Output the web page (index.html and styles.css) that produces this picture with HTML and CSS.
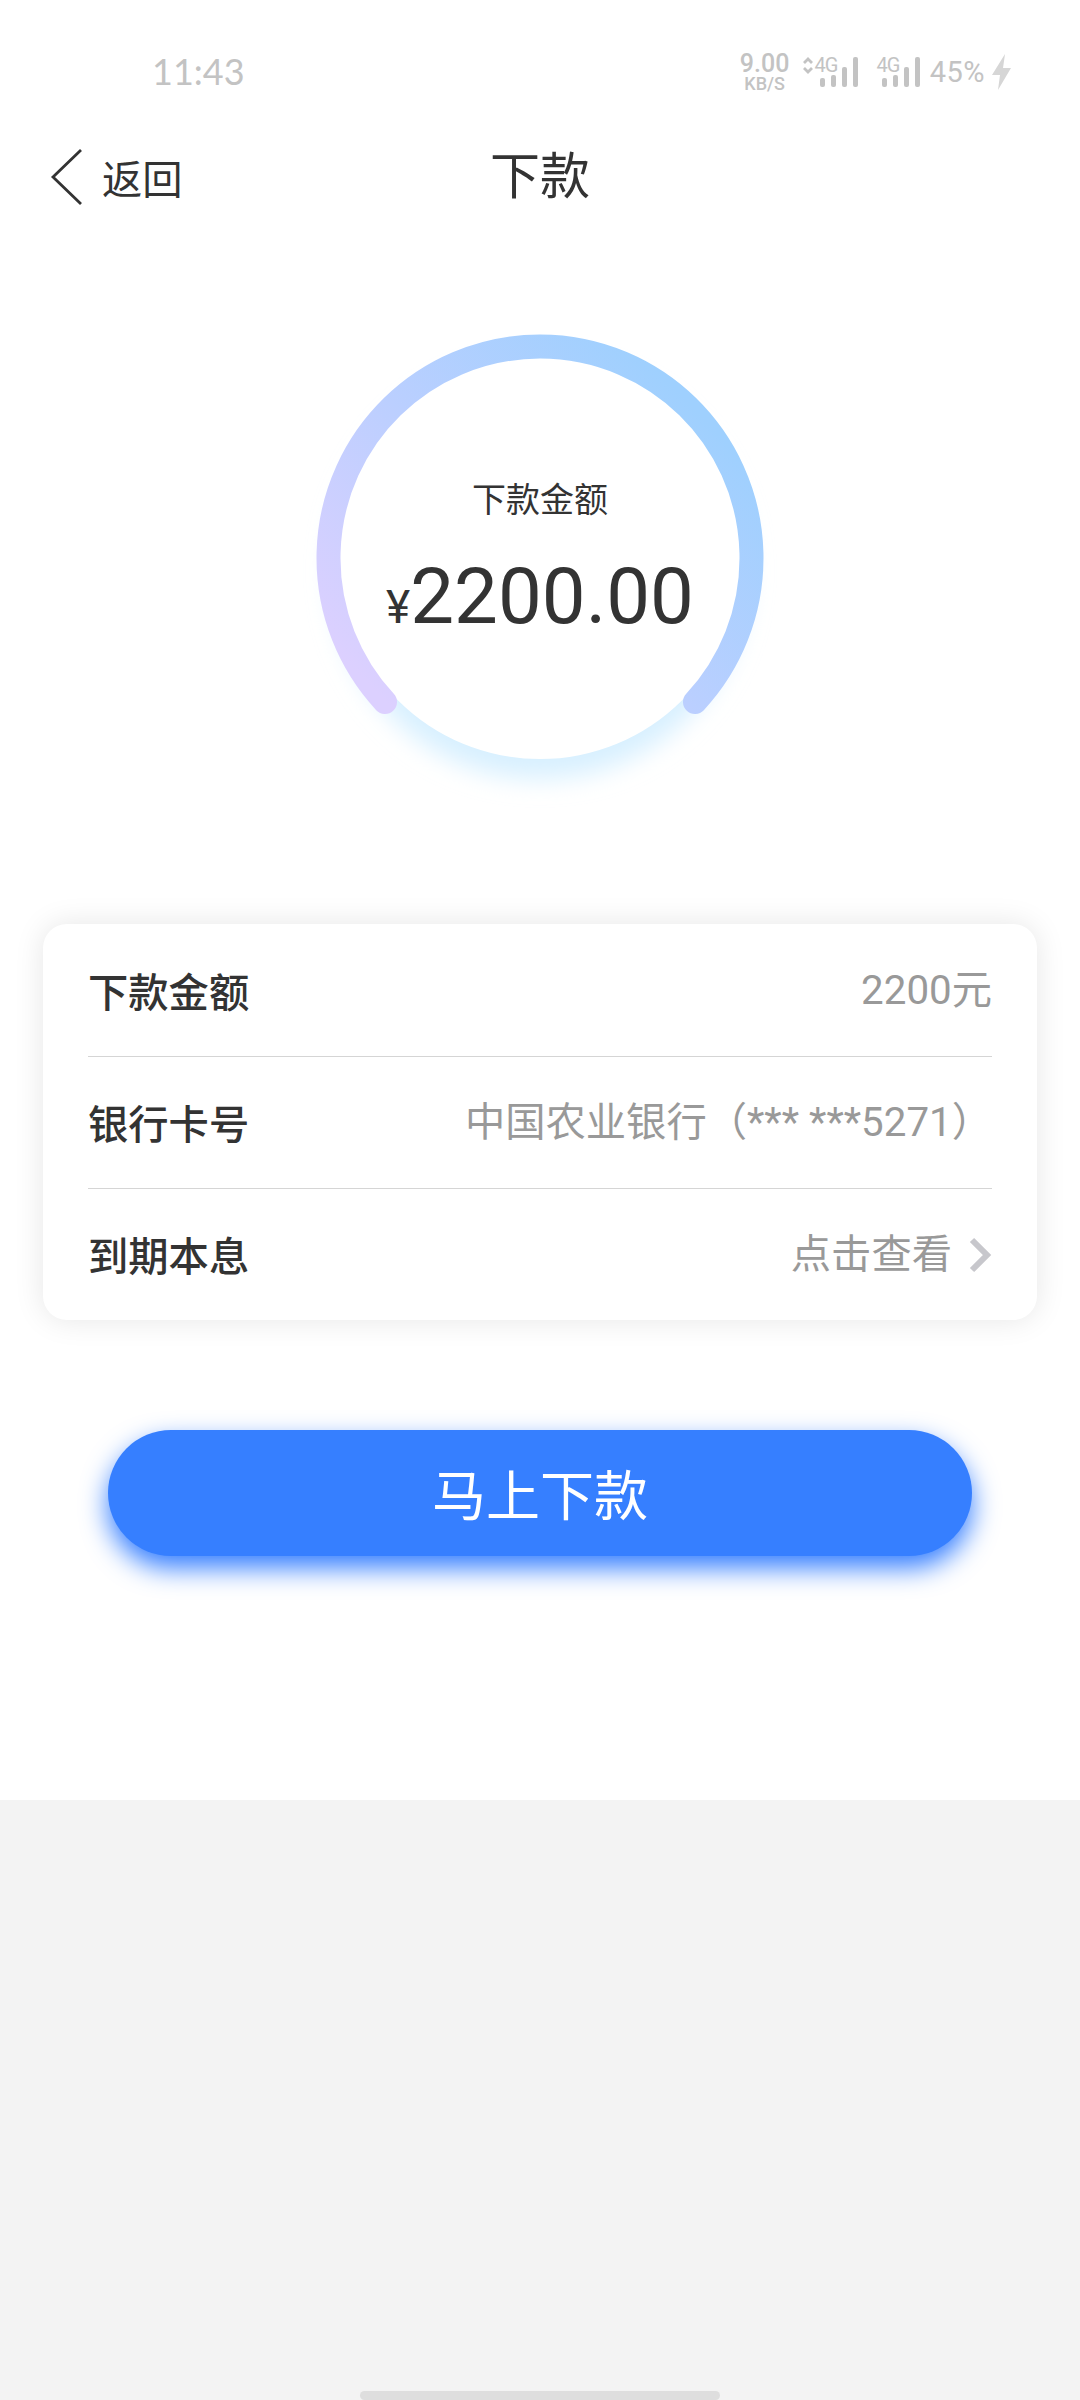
FILE: index.html
```html
<!DOCTYPE html>
<html lang="zh-CN">
<head>
  <meta charset="UTF-8">
  <title>下款</title>
  <link rel="stylesheet" href="styles.css">
</head>
<body>
  <div class="page">
    <div class="status">
      <span class="time">11:43</span>
      <div class="speed">
        <span class="speed-num">9.00</span>
        <span class="speed-unit">KB/S</span>
      </div>
      <svg class="signal" width="58" height="32" viewBox="0 0 58 32">
        <path d="M2 7l4-4 4 4M2 12l4 4 4-4" fill="none" stroke="#c3c3c3" stroke-width="2.8" />
        <text x="12.500" y="15.500">4G</text>
        <rect x="18" y="22" width="5" height="9" rx="2" />
        <rect x="29" y="19" width="5" height="12" rx="2" />
        <rect x="40" y="11" width="5" height="20" rx="2" />
        <rect x="51" y="1" width="5" height="30" rx="2" />
      </svg>
      <svg class="signal signal2" width="46" height="32" viewBox="12 0 46 32">
        <text x="12.500" y="15.500">4G</text>
        <rect x="18" y="22" width="5" height="9" rx="2" />
        <rect x="29" y="19" width="5" height="12" rx="2" />
        <rect x="40" y="11" width="5" height="20" rx="2" />
        <rect x="51" y="1" width="5" height="30" rx="2" />
      </svg>
      <span class="battery">45%</span>
      <svg class="bolt" width="20" height="36" viewBox="0 0 20 36">
        <path d="M13 0L0 21h8l-2 15L19 14h-8z" fill="#d6d6d6" />
      </svg>
    </div>

    <div class="nav">
      <a class="back">
        <svg width="32" height="56" viewBox="0 0 32 56">
          <path d="M31 1L3 28l28 27" fill="none" stroke="#333" stroke-width="2.8" />
        </svg>
        <span>返回</span>
      </a>
      <h1 class="title">下款</h1>
    </div>

    <div class="ring">
      <svg class="ring-bg" width="540" height="540" viewBox="0 0 540 540">
        <defs>
          <linearGradient id="arc" gradientUnits="userSpaceOnUse" x1="115" y1="417" x2="420" y2="120">
            <stop offset="0" stop-color="#dcd0ff" />
            <stop offset="0.5" stop-color="#bbcfff" />
            <stop offset="1" stop-color="#9fd0fe" />
          </linearGradient>
          <filter id="blur" x="-20%" y="-20%" width="140%" height="140%">
            <feGaussianBlur stdDeviation="12" />
          </filter>
        </defs>
        <circle cx="270" cy="287" r="208" fill="#d8f0ff" filter="url(#blur)" />
        <circle cx="270" cy="274" r="201" fill="#fff" />
        <path d="M115 418A211.5 211.5 0 1 1 425 418" fill="none" stroke="url(#arc)" stroke-width="24" stroke-linecap="round" />
      </svg>
      <div class="ring-text">
        <div class="ring-label">下款金额</div>
        <div class="ring-num"><span>¥</span>2200.00</div>
      </div>
    </div>

    <div class="card">
      <div class="row">
        <span class="label">下款金额</span>
        <span class="value">2200元</span>
      </div>
      <div class="row">
        <span class="label">银行卡号</span>
        <span class="value">中国农业银行（*** ***5271）</span>
      </div>
      <div class="row">
        <span class="label">到期本息</span>
        <span class="value">点击查看</span>
        <svg class="arrow" width="24" height="36" viewBox="0 0 24 36">
          <path d="M4 3l15 15L4 33" fill="none" stroke="#c7c7cc" stroke-width="6" />
        </svg>
      </div>
    </div>

    <button class="submit">马上下款</button>
  </div>
  <div class="home-bar"></div>
</body>
</html>
```

FILE: styles.css
```css
body {
  display: flex;
  flex-direction: column;
  justify-content: space-between;
  align-items: center;
  height: 2400px;
  margin: 0;
  background: #f3f3f3;
  color: #333;
  font-family: Roboto, "Noto Sans CJK SC", sans-serif;
}
.page {
  width: 1080px;
  height: 1800px;
  background: #fff;
}
.status {
  display: flex;
  align-items: center;
  box-sizing: border-box;
  height: 144px;
  padding: 0 68px 0 152px;
  color: #c3c3c3;
}
.time {
  flex: 1;
  margin-bottom: 3px;
  font-family: Lato, sans-serif;
  font-size: 36px;
}
.speed {
  display: flex;
  flex-direction: column;
  align-items: center;
  width: 50px;
  margin-top: 2px;
  font-weight: 500;
}
.speed-num {
  font-size: 25px;
  line-height: 21px;
}
.speed-unit {
  font-size: 18px;
  line-height: 20px;
}
.signal {
  margin-left: 12px;
  fill: #c3c3c3;
  overflow: visible;
}
.signal2 {
  margin-left: 16px;
}
.signal text {
  font-size: 20px;
  letter-spacing: -1px;
}
.battery {
  margin-left: 8px;
  font-size: 29px;
  letter-spacing: .5px;
}
.bolt {
  margin-left: 7px;
}
.nav {
  display: flex;
  align-items: center;
  height: 66px;
  padding: 0 50px;
}
.back {
  display: flex;
  align-items: center;
  flex: 1;
  font-size: 40.3px;
  line-height: 60px;
}
.back span {
  margin: 8px 0 0 20px;
}
.title {
  margin: 0;
  font-size: 50px;
  font-weight: 400;
  line-height: 60px;
}
/* same width as .back, keeps the title centered */
.nav::after {
  content: "";
  flex: 1;
}
.ring {
  position: relative;
  width: 540px;
  height: 540px;
  margin: 74px auto 0;
}
.ring-bg {
  display: block;
}
.ring-text {
  position: absolute;
  top: 191px;
  left: 0;
  width: 100%;
  text-align: center;
}
.ring-label {
  font-size: 34px;
  line-height: 50px;
}
.ring-num {
  margin-top: 27px;
  font-size: 78px;
  line-height: 90px;
}
.ring-num span {
  font-size: 46px;
}
.card {
  width: 904px;
  margin: 100px auto 0;
  padding: 0 45px;
  border-radius: 24px;
  background: #fff;
  box-shadow: 0 0 30px rgba(0, 0, 0, .1);
}
.row {
  display: flex;
  align-items: center;
  box-sizing: border-box;
  height: 132px;
  border-bottom: 1px solid #d5d5d5;
}
.row:first-child {
  height: 133px;
}
.row:last-child {
  height: 131px;
  border-bottom: 0;
}
.label {
  flex: 1;
  margin-bottom: 2px;
  font-size: 40.3px;
  font-weight: 500;
}
.value {
  margin-bottom: 8px;
  font-size: 40.3px;
  color: #999;
}
.arrow {
  margin-left: 16px;
}
.submit {
  display: block;
  width: 864px;
  height: 126px;
  margin: 110px auto 0;
  padding: 0 0 2px;
  border: 0;
  border-radius: 63px;
  background: #367fff;
  box-shadow: 0 12px 27px #367fff;
  color: #fff;
  font-family: inherit;
  font-size: 54px;
}
.home-bar {
  width: 360px;
  height: 9px;
  border-radius: 5px;
  background: #dedede;
}
```
